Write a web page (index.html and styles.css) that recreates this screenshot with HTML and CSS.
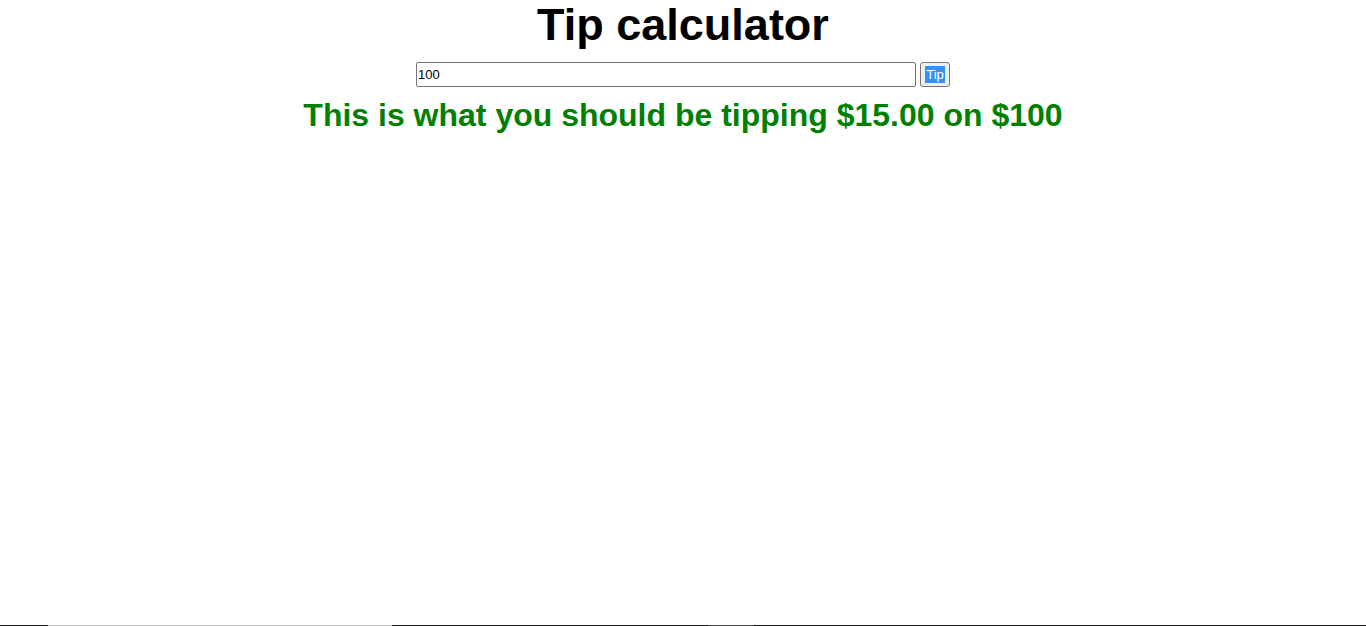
FILE: index.html
```html
<!DOCTYPE html>
<html lang="en">
<head>
<meta charset="utf-8">
<title>Tip calculator</title>
<link rel="stylesheet" href="styles.css">
</head>
<body>
<main class="app">
  <h1 class="title">Tip calculator</h1>
  <div class="form-row">
    <input class="amount" type="text" value="100">
    <button class="tip-btn" type="button"><span class="sel">Tip</span></button>
  </div>
  <h2 class="result">This is what you should be tipping $15.00 on $100</h2>
</main>
<div class="strip">
  <span class="seg dark s1"></span>
  <span class="seg light s2"></span>
  <span class="seg dark s3"></span>
  <span class="seg mid s4"></span>
  <span class="seg dark s5"></span>
</div>
</body>
</html>
```
FILE: styles.css
```css
html, body {
  margin: 0;
  padding: 0;
  background: #ffffff;
}
body {
  font-family: "Liberation Sans", Arial, sans-serif;
  color: #000;
}
.app {
  display: flex;
  flex-direction: column;
  align-items: center;
  text-align: center;
}
.title {
  margin: 0;
  font-size: 45px;
  line-height: 50px;
  font-weight: bold;
}
.form-row {
  display: flex;
  align-items: center;
  gap: 4px;
  margin-top: 12px;
}
.amount {
  box-sizing: border-box;
  width: 500px;
  height: 25px;
  border: 1px solid #767676;
  border-radius: 2px;
  padding: 0 1px;
  margin: 0;
  font-family: "Liberation Sans", Arial, sans-serif;
  font-size: 13px;
  color: #000;
  background: #fff;
  outline: none;
}
.tip-btn {
  box-sizing: border-box;
  width: 30px;
  height: 25px;
  margin: 0;
  padding: 0;
  border: 1px solid #767676;
  border-radius: 3px;
  background: #efefef;
  font-family: "Liberation Sans", Arial, sans-serif;
  font-size: 13px;
  color: #000;
  display: flex;
  align-items: center;
  justify-content: center;
}
.sel {
  background: #3390ff;
  color: #fff;
  padding: 1px 1px;
  line-height: 15px;
}
.result {
  margin: 10px 0 0 0;
  font-size: 32px;
  line-height: 37px;
  font-weight: bold;
  color: #008000;
}
.strip {
  position: fixed;
  left: 0;
  right: 0;
  bottom: 0;
  height: 1px;
  display: flex;
}
.seg { height: 1px; }
.dark { background: #1f1f1f; }
.light { background: #c2c2c2; }
.mid { background: #4e4e4e; }
.s1 { width: 48px; }
.s2 { width: 344px; }
.s3 { width: 316px; }
.s4 { width: 46px; }
.s5 { flex: 1; }
```
